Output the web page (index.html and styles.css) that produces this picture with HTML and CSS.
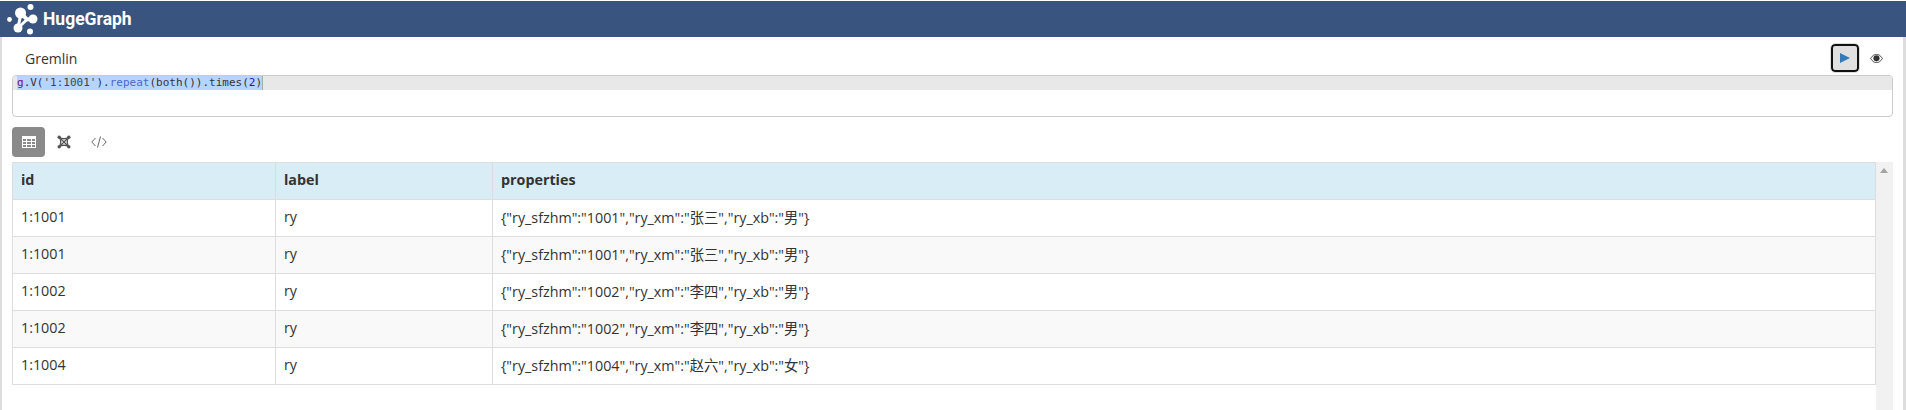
FILE: index.html
```html
<!DOCTYPE html>
<html lang="zh">
<head>
    <meta charset="UTF-8">
    <title>HugeGraph</title>
    <link rel="stylesheet" href="styles.css">
</head>
<body>

    <!-- Top bar -->
    <div class="navbar">
        <svg class="logo" width="38" height="36" viewBox="0 0 38 36">
            <g stroke="#fff" fill="none">
                <path d="M21 12 L27 18.5 L33 18" stroke-width="4"/>
                <path d="M21 12 L18 27" stroke-width="3"/>
                <path d="M18 27 L27 18.5" stroke-width="3"/>
            </g>
            <circle cx="9.5" cy="18.5" r="2.4" fill="#fff"/>
            <circle cx="30.5" cy="6" r="3" fill="#fff"/>
            <circle cx="30" cy="30.5" r="3" fill="#fff"/>
            <circle cx="20.5" cy="12" r="5.5" fill="#fff"/>
            <circle cx="18" cy="27" r="4.5" fill="#fff"/>
            <circle cx="33" cy="18" r="4.5" fill="#fff"/>
        </svg>
        <span class="brand">HugeGraph</span>
    </div>

    <div class="page">
        <!-- Query editor -->
        <div class="query-head">
            <span class="query-title">Gremlin</span>
            <div class="query-actions">
                <button class="run-btn">
                    <svg width="12" height="12" viewBox="0 0 12 12"><path d="M1 1 L11 6 L1 11 Z" fill="#337ab7"/></svg>
                </button>
                <svg class="eye" width="13" height="9" viewBox="0 0 14 10">
                    <path d="M0.5 5 C3 1 5 0.5 7 0.5 C9 0.5 11 1 13.5 5 C11 9 9 9.5 7 9.5 C5 9.5 3 9 0.5 5 Z" fill="#fff" stroke="#333"/>
                    <circle cx="7" cy="4.8" r="3.4" fill="#333"/>
                </svg>
            </div>
        </div>

        <div class="editor">
            <div class="active-line"><span class="selected"><span class="c-var">g</span>.V(<span class="c-str">'1:1001'</span>).<span class="c-fn">repeat</span>(both()).times(<span class="c-num">2</span>)</span></div>
        </div>

        <!-- View switcher -->
        <div class="view-tabs">
            <button class="tab active">
                <svg width="14" height="12" viewBox="0 0 14 12">
                    <path fill="#fff" fill-rule="evenodd" d="M0 0H14V12H0Z M1 3V5H4V3Z M5 3V5H9V3Z M10 3V5H13V3Z M1 6V8H4V6Z M5 6V8H9V6Z M10 6V8H13V6Z M1 9V11H4V9Z M5 9V11H9V9Z M10 9V11H13V9Z"/>
                </svg>
            </button>
            <button class="tab">
                <svg width="14" height="14" viewBox="0 0 14 14">
                    <g stroke="#555" stroke-width="1.3" fill="none">
                        <path d="M2 2 L12 12 M12 2 L2 12"/>
                        <path d="M2.5 2.5 Q7 5 11.5 2.5 Q9 7 11.5 11.5 Q7 9 2.5 11.5 Q5 7 2.5 2.5 Z"/>
                    </g>
                    <g fill="#555">
                        <circle cx="2.2" cy="2.2" r="1.7"/>
                        <circle cx="11.8" cy="2.2" r="1.7"/>
                        <circle cx="2.2" cy="11.8" r="1.7"/>
                        <circle cx="11.8" cy="11.8" r="1.7"/>
                    </g>
                </svg>
            </button>
            <button class="tab">
                <svg width="16" height="12" viewBox="0 0 16 12">
                    <path d="M4.5 2 L0.8 6 L4.5 10 M11.5 2 L15.2 6 L11.5 10 M9.5 0.5 L6.5 11.5" stroke="#666" stroke-width="1" fill="none"/>
                </svg>
            </button>
        </div>

        <!-- Result table -->
        <div class="result">
            <table class="result-table">
                <thead>
                    <tr>
                        <th class="col-id">id</th>
                        <th class="col-label">label</th>
                        <th>properties</th>
                    </tr>
                </thead>
                <tbody>
                    <tr><td>1:1001</td><td>ry</td><td>{"ry_sfzhm":"1001","ry_xm":"张三","ry_xb":"男"}</td></tr>
                    <tr><td>1:1001</td><td>ry</td><td>{"ry_sfzhm":"1001","ry_xm":"张三","ry_xb":"男"}</td></tr>
                    <tr><td>1:1002</td><td>ry</td><td>{"ry_sfzhm":"1002","ry_xm":"李四","ry_xb":"男"}</td></tr>
                    <tr><td>1:1002</td><td>ry</td><td>{"ry_sfzhm":"1002","ry_xm":"李四","ry_xb":"男"}</td></tr>
                    <tr><td>1:1004</td><td>ry</td><td>{"ry_sfzhm":"1004","ry_xm":"赵六","ry_xb":"女"}</td></tr>
                </tbody>
            </table>
            <div class="scrollbar"><span class="scroll-up"></span></div>
        </div>
    </div>

</body>
</html>
```

FILE: styles.css
```css
* {
    margin: 0;
    padding: 0;
    box-sizing: border-box;
}

html, body {
    height: 410px;
    overflow: hidden;
}

body {
    font-family: 'Open Sans', 'Noto Sans CJK SC', sans-serif;
    font-size: 14.3px;
    color: #333;
    background-color: #fff;
    padding-top: 1px;
}

.navbar {
    height: 36px;
    background-color: #39547f;
    display: flex;
    align-items: center;
}

.logo {
    flex: none;
}

.brand {
    margin-left: 5px;
    color: #fff;
    font-family: Roboto, sans-serif;
    font-size: 17.5px;
    font-weight: 700;
}

.page {
    height: 373px;
    padding: 0 10px;
    border-left: 2px solid #ddd;
    border-right: 3px solid #ddd;
    background-color: #fff;
}

.query-head {
    height: 38px;
    display: flex;
    justify-content: space-between;
    align-items: flex-end;
    padding-left: 13px;
}

.query-title {
    font-size: 14px;
    line-height: 22px;
    margin-bottom: 5px;
}

.query-actions {
    display: flex;
    align-items: center;
    gap: 11px;
    margin-right: 10px;
    margin-bottom: 3px;
}

.run-btn {
    width: 28px;
    height: 28px;
    display: flex;
    align-items: center;
    justify-content: center;
    background-color: #e0e0e0;
    border: 2px solid #111;
    border-radius: 4px;
    outline: 1px solid #ddd;
}

.editor {
    height: 42px;
    border: 1px solid #ccc;
    border-radius: 4px;
    overflow: hidden;
}

.active-line {
    height: 14px;
    background-color: #e8e8e8;
    padding-left: 4px;
    font-family: 'DejaVu Sans Mono', monospace;
    font-size: 11px;
    line-height: 14px;
    white-space: pre;
}

.selected {
    display: inline-block;
    background-color: #b5d5ff;
    border-right: 1px solid #aaa;
    color: #333;
}

.c-var { color: #7a0874; }
.c-str { color: #444; }
.c-fn { color: #4b69c6; }
.c-num { color: #1a1aa6; }

.view-tabs {
    display: flex;
    gap: 2px;
    margin-top: 10px;
}

.tab {
    width: 33px;
    height: 30px;
    display: flex;
    align-items: center;
    justify-content: center;
    background: none;
    border: none;
    border-radius: 4px;
}

.tab.active {
    background-color: #8a8a8a;
}

.result {
    display: flex;
    margin-top: 5px;
}

.result-table {
    flex: 1;
    border-collapse: collapse;
    table-layout: fixed;
    height: 222px;
}

.result-table th,
.result-table td {
    border: 1px solid #ddd;
    padding: 0 8px 3px;
    text-align: left;
    height: 37px;
}

.result-table th {
    background-color: #d9edf7;
    font-weight: 700;
}

.col-id {
    width: 263px;
}

.col-label {
    width: 217px;
}

.result-table tbody tr:nth-child(even) {
    background-color: #f9f9f9;
}

.scrollbar {
    width: 17px;
    height: 248px;
    background-color: #f1f1f1;
    flex: none;
    position: relative;
}

.scroll-up {
    position: absolute;
    left: 4px;
    top: 6px;
    border-left: 4px solid transparent;
    border-right: 4px solid transparent;
    border-bottom: 5px solid #a3a3a3;
}
```
